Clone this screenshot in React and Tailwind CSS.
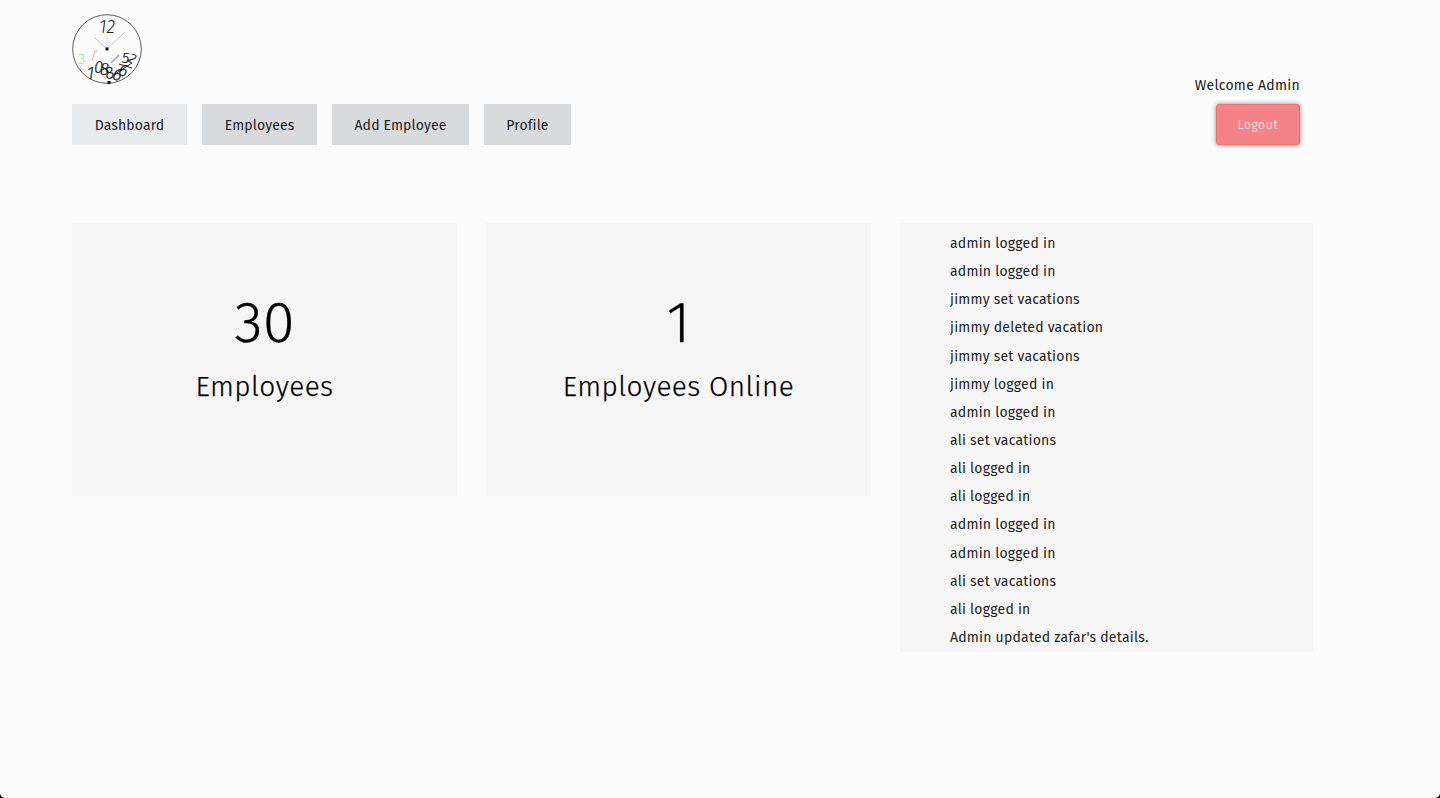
const LOG = ["admin logged in","admin logged in","jimmy set vacations","jimmy deleted vacation","jimmy set vacations","jimmy logged in","admin logged in","ali set vacations","ali logged in","ali logged in","admin logged in","admin logged in","ali set vacations","ali logged in","Admin updated zafar's details."];
const NAV = [["Dashboard","w-[115px] bg-[#e9eaec]"],["Employees","w-[115px] bg-[#d9dadc]"],["Add Employee","w-[137px] bg-[#d9dadc]"],["Profile","w-[87px] bg-[#d9dadc]"]];

function Clock() {
  return (
    <svg width="70" height="70" viewBox="0 0 70 70" className="block" fill="none">
      <circle cx="35" cy="35" r="34.3" stroke="#333" strokeWidth="0.8" />
      <g stroke="#999" strokeWidth="0.6">
        <path d="M35 35L53 18" /><path d="M35 35L23 24" /><path d="M35 35V20" stroke="#ccc" />
      </g>
      <rect x="33.5" y="33.5" width="3" height="3" fill="#111" />
      <rect x="35.5" y="67" width="3" height="3" fill="#111" />
      <text x="27" y="18.5" fontSize="18" fontStyle="italic" fontWeight="300" fontFamily="Fira Sans" fill="#222">12</text>
      <text x="6" y="50" fontSize="15" fontWeight="300" fontFamily="Fira Sans" fill="#8fe89a">3</text>
      <path d="M20 47L23 37L25 37" stroke="#f2a0a0" strokeWidth="1" />
      <path d="M39 49L47 41" stroke="#a78bfa" strokeWidth="1.4" />
      <g fontFamily="Fira Sans" fontSize="17" fontWeight="300" fill="#111" stroke="#111" strokeWidth="0.2" fontStyle="italic">
        <text x="15" y="65">1</text><text x="22" y="59">0</text><text x="28" y="61">8</text><text x="33" y="65" transform="rotate(-15 36 60)">8</text>
        <text x="41" y="66" transform="rotate(15 44 60)">6</text><text x="47" y="62" transform="rotate(15 51 56)">6</text><text x="50" y="49" fontSize="15">5</text><text x="57" y="49" fontSize="14" transform="rotate(30 60 44)">2</text>
      </g>
      <path d="M43 60L60 49M47 50L60 54" stroke="#111" strokeWidth="0.9" />
    </svg>
  );
}

const statLabel = "mt-[11px] text-[28px] leading-[38px] tracking-[0.45px] [-webkit-text-stroke:0.25px_black]";
const statNum = "text-[58px] leading-[68px] [-webkit-text-stroke:0.3px_black]";

export default function App() {
  return (
    <div className="relative h-[798px] overflow-hidden bg-[#fcfcfc] pl-[72px] font-['Fira_Sans','Noto_Sans','Open_Sans',sans-serif] text-[#1a1a1a]">
      <header className="flex h-[145px] w-[1228px] items-end justify-between pt-[14px]">
        <div>
          <Clock />
          <nav className="mt-5 flex gap-[15px]">
            {NAV.map(([label, cls]) => (
              <a key={label} className={`flex h-[41px] items-center justify-center pt-[2px] text-sm tracking-[0.14px] text-[#222] ${cls}`}>{label}</a>
            ))}
          </nav>
        </div>
        <div className="flex flex-col items-end">
          <p className="mb-[8px] text-sm leading-5 tracking-[0.28px]">Welcome Admin</p>
          <button className="h-[41px] w-[84px] rounded-[3px] border border-[#ef6f73] bg-[#f48387] text-xs font-light tracking-[0.75px] text-white shadow-[0_0_5px_rgba(0,0,0,0.45)]">Logout</button>
        </div>
      </header>
      <main className="mt-[78px] flex items-start gap-[29px] font-light">
        <section className="flex h-[273px] w-[385px] flex-col items-center bg-[#f6f6f6] pt-[66px] text-black">
          <div className={statNum}>30</div>
          <div className={statLabel}>Employees</div>
        </section>
        <section className="flex h-[273px] w-[385px] flex-col items-center bg-[#f6f6f6] pt-[66px] text-black">
          <div className={statNum}>1</div>
          <div className={statLabel}>Employees Online</div>
        </section>
        <ul className="h-[429px] w-[413px] bg-[#f6f6f6] pl-[50px] pt-[7px] font-normal">
          {LOG.map((t, i) => (
            <li key={i} className="h-[28.15px] text-sm leading-[28.15px] tracking-[0.22px] text-[#222]">{t}</li>
          ))}
        </ul>
      </main>
      <svg className="absolute bottom-0 left-0" width="5" height="5" viewBox="0 0 5 5"><path d="M0 0A5 5 0 0 0 5 5H0Z" fill="#000" /></svg>
      <svg className="absolute bottom-0 right-0" width="5" height="5" viewBox="0 0 5 5"><path d="M5 0A5 5 0 0 1 0 5H5Z" fill="#000" /></svg>
    </div>
  );
}
